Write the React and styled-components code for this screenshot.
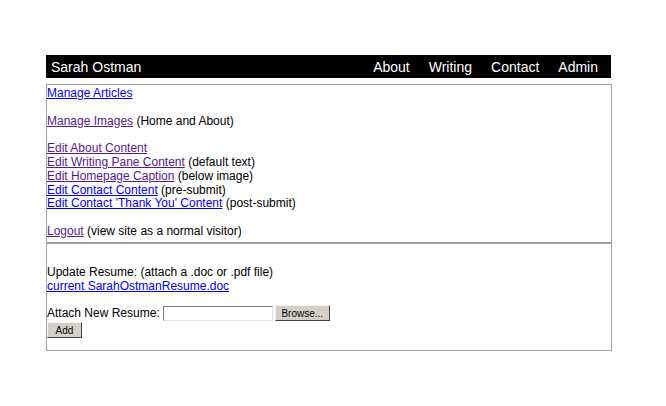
import React from "react";
import styled, { createGlobalStyle } from "styled-components";

const GlobalStyle = createGlobalStyle`
  html, body {
    margin: 0;
    padding: 0;
    background: #fff;
  }
  body {
    font-family: "Liberation Sans", Arial, sans-serif;
    font-size: 12px;
    color: #000;
  }
`;

const Page = styled.div`
  width: 566px;
  margin: 55px 0 0 46px;
`;

const Header = styled.div`
  display: flex;
  align-items: center;
  height: 23px;
  width: 565px;
  background: #000;
  color: #fff;
  font-size: 14px;
  padding: 0 13px 0 5px;
  box-sizing: border-box;
`;

const Brand = styled.span`
  flex: 1;
`;

const Nav = styled.nav`
  display: flex;
  gap: 19px;
`;

const NavItem = styled.span`
  color: #fff;
`;

const Box = styled.div`
  margin-top: 6px;
  border: 1px solid #a0a0a0;
  width: 566px;
  box-sizing: border-box;
`;

const Section = styled.div`
  padding: ${(p) => p.$pad || "0"};
  border-top: ${(p) => (p.$divided ? "2px solid #a0a0a0" : "none")};
`;

const Line = styled.div`
  min-height: ${(p) => p.$h || "13.8px"};
  line-height: 13.8px;
`;

const Link = styled.a`
  color: ${(p) => (p.$visited ? "#551a8b" : "#0000ee")};
  text-decoration: underline;
  cursor: pointer;
`;

const FormRow = styled.div`
  display: flex;
  align-items: center;
  height: 16px;
`;

const FileField = styled.input`
  width: 110px;
  height: 15px;
  box-sizing: border-box;
  margin: 0 2px 0 3px;
  padding: 0;
  border: 1px solid;
  border-color: #7a7a7a #e0e0e0 #e0e0e0 #7a7a7a;
  background: #fff;
`;

const Button = styled.button`
  display: block;
  font-family: "Liberation Sans", Arial, sans-serif;
  font-size: 10px;
  color: #000;
  background: #d4d0c8;
  height: 16px;
  width: ${(p) => p.$w};
  padding: 0;
  margin: ${(p) => p.$m || "0"};
  border: 1px solid;
  border-color: #f4f4f4 #404040 #404040 #f4f4f4;
  box-sizing: border-box;
`;

export default function App() {
  return (
    <>
      <GlobalStyle />
      <Page>
        <Header>
          <Brand>Sarah Ostman</Brand>
          <Nav>
            <NavItem>About</NavItem>
            <NavItem>Writing</NavItem>
            <NavItem>Contact</NavItem>
            <NavItem>Admin</NavItem>
          </Nav>
        </Header>
        <Box>
          <Section $pad="2px 0 3px">
            <Line><Link>Manage Articles</Link></Line>
            <Line />
            <Line><Link $visited>Manage Images</Link> (Home and About)</Line>
            <Line />
            <Line><Link $visited>Edit About Content</Link></Line>
            <Line><Link $visited>Edit Writing Pane Content</Link> (default text)</Line>
            <Line><Link $visited>Edit Homepage Caption</Link> (below image)</Line>
            <Line><Link>Edit Contact Content</Link> (pre-submit)</Line>
            <Line><Link>Edit Contact 'Thank You' Content</Link> (post-submit)</Line>
            <Line />
            <Line><Link $visited>Logout</Link> (view site as a normal visitor)</Line>
          </Section>
          <Section $divided $pad="22px 0 12px">
            <Line>Update Resume: (attach a .doc or .pdf file)</Line>
            <Line><Link>current SarahOstmanResume.doc</Link></Line>
            <Line $h="12px" />
            <FormRow>
              Attach New Resume:
              <FileField type="text" />
              <Button $w="55px">Browse...</Button>
            </FormRow>
            <Button $w="35px" $m="1px 0 0">Add</Button>
          </Section>
        </Box>
      </Page>
    </>
  );
}
